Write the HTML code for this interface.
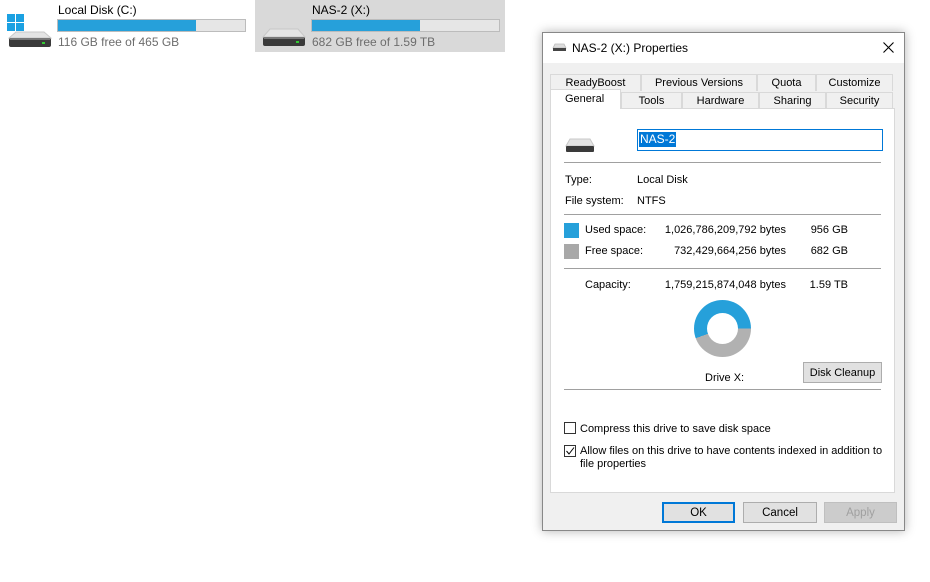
<!DOCTYPE html>
<html><head><style>
body{margin:0;width:930px;height:582px;background:#fff;position:relative;overflow:hidden;font-family:"Liberation Sans",sans-serif;font-size:11px;color:#000}
.a{position:absolute;white-space:nowrap}
.bar{position:absolute;height:13px;background:#e6e6e6;border:1px solid #bcbcbc;box-sizing:border-box}
.bar i{display:block;height:100%;background:#26a0da}
.tab{position:absolute;height:17px;border:1px solid #d9d9d9;border-bottom:none;background:#f0f0f0;box-sizing:border-box;text-align:center;line-height:16px}
.hr{position:absolute;left:564px;width:317px;height:1px;background:#a0a0a0}
.btn{position:absolute;height:21px;border:1px solid #adadad;background:#e1e1e1;box-sizing:border-box;text-align:center;line-height:20px;font-size:11.5px}
.r{text-align:right}
.cb{position:absolute;width:12px;height:12px;border:1px solid #333;background:#fff;box-sizing:border-box}
</style></head><body>
<div class="a" style="left:255px;top:0;width:250px;height:52px;background:#d9d9d9"></div>
<svg class="a" style="left:8px;top:31px" width="44" height="17"><path d="M8 1 L36 1 L43 7 L1 7 Z" fill="#e4e4e4" stroke="#c8c8c8"/><rect x="1" y="7" width="42" height="9" rx="2" fill="#3a3a3a"/><rect x="2" y="7" width="40" height="2" fill="#777"/><rect x="34" y="11" width="3" height="2" fill="#3c3"/></svg>
<svg class="a" style="left:7px;top:14px" width="18" height="18"><rect x="0" y="0" width="8" height="8" fill="#1ba1e2"/><rect x="9" y="0" width="8" height="8" fill="#1ba1e2"/><rect x="0" y="9" width="8" height="8" fill="#1ba1e2"/><rect x="9" y="9" width="8" height="8" fill="#1ba1e2"/></svg>
<div class="a" style="left:58px;top:3px;font-size:12px">Local Disk (C:)</div>
<div class="bar" style="left:57px;top:19px;width:189px"><i style="width:74%"></i></div>
<div class="a" style="left:58px;top:35px;font-size:12px;color:#6d6d6d">116 GB free of 465 GB</div>
<svg class="a" style="left:262px;top:28px" width="44" height="20"><path d="M8 1 L36 1 L43 9 L1 9 Z" fill="#e4e4e4" stroke="#c8c8c8"/><rect x="1" y="9" width="42" height="9" rx="2" fill="#3a3a3a"/><rect x="2" y="9" width="40" height="2" fill="#777"/><rect x="34" y="13" width="3" height="2" fill="#3c3"/></svg>
<div class="a" style="left:312px;top:3px;font-size:12px">NAS-2 (X:)</div>
<div class="bar" style="left:311px;top:19px;width:189px"><i style="width:58%"></i></div>
<div class="a" style="left:312px;top:35px;font-size:12px;color:#6d6d6d">682 GB free of 1.59 TB</div>

<div class="a" style="left:542px;top:32px;width:363px;height:499px;background:#f0f0f0;border:1px solid #888;box-sizing:border-box;box-shadow:0 0 10px rgba(0,0,0,.3)"></div>
<div class="a" style="left:543px;top:33px;width:361px;height:30px;background:#fff"></div>
<svg class="a" style="left:552px;top:43px" width="15" height="9"><path d="M3 1 L12 1 L14 5 L1 5Z" fill="#ddd" stroke="#bbb" stroke-width=".8"/><rect x="1" y="5" width="13" height="3" fill="#444"/></svg>
<div class="a" style="left:572px;top:41px;font-size:12px">NAS-2 (X:) Properties</div>
<svg class="a" style="left:883px;top:42px" width="11" height="11"><path d="M0.5 0.5 L10.5 10.5 M10.5 0.5 L0.5 10.5" stroke="#000" stroke-width="1.1"/></svg>

<div class="a" style="left:550px;top:108px;width:345px;height:385px;background:#fff;border:1px solid #d9d9d9;box-sizing:border-box"></div>
<div class="tab" style="left:550px;top:74px;width:91px">ReadyBoost</div>
<div class="tab" style="left:641px;top:74px;width:116px">Previous Versions</div>
<div class="tab" style="left:757px;top:74px;width:59px">Quota</div>
<div class="tab" style="left:816px;top:74px;width:77px">Customize</div>
<div class="tab" style="left:621px;top:92px;width:61px;height:16px">Tools</div>
<div class="tab" style="left:682px;top:92px;width:77px;height:16px">Hardware</div>
<div class="tab" style="left:759px;top:92px;width:67px;height:16px">Sharing</div>
<div class="tab" style="left:826px;top:92px;width:67px;height:16px">Security</div>
<div class="tab" style="left:550px;top:89px;width:71px;height:20px;background:#fff;line-height:18px;text-align:left;padding-left:14px">General</div>

<svg class="a" style="left:565px;top:138px" width="30" height="16"><path d="M5 1 L25 1 L29 8 L1 8Z" fill="#e4e4e4" stroke="#c8c8c8"/><rect x="1" y="8" width="28" height="6" rx="1" fill="#3a3a3a"/></svg>
<div class="a" style="left:637px;top:129px;width:246px;height:22px;border:1px solid #0078d7;box-sizing:border-box;background:#fff"></div>
<div class="a" style="left:639px;top:132px;background:#0078d7;color:#fff;font-size:12px;line-height:15px;padding:0 1px">NAS-2</div>
<div class="hr" style="top:162px"></div>
<div class="a" style="left:565px;top:174px">Type:</div>
<div class="a" style="left:637px;top:174px">Local Disk</div>
<div class="a" style="left:565px;top:195px">File system:</div>
<div class="a" style="left:637px;top:195px">NTFS</div>
<div class="hr" style="top:214px"></div>
<div class="a" style="left:564px;top:223px;width:15px;height:15px;background:#26a0da"></div>
<div class="a" style="left:585px;top:224px">Used space:</div>
<div class="a r" style="left:640px;top:224px;width:146px">1,026,786,209,792 bytes</div>
<div class="a r" style="left:790px;top:224px;width:58px">956 GB</div>
<div class="a" style="left:564px;top:244px;width:15px;height:15px;background:#a8a8a8"></div>
<div class="a" style="left:585px;top:245px">Free space:</div>
<div class="a r" style="left:640px;top:245px;width:146px">732,429,664,256 bytes</div>
<div class="a r" style="left:790px;top:245px;width:58px">682 GB</div>
<div class="hr" style="top:268px"></div>
<div class="a" style="left:585px;top:279px">Capacity:</div>
<div class="a r" style="left:640px;top:279px;width:146px">1,759,215,874,048 bytes</div>
<div class="a r" style="left:790px;top:279px;width:58px">1.59 TB</div>
<div class="a" style="left:694px;top:300px;width:57px;height:57px;border-radius:50%;background:conic-gradient(from -110deg,#26a0da 0deg 200deg,#b1b1b1 200deg 360deg)"></div>
<div class="a" style="left:707px;top:313px;width:31px;height:31px;border-radius:50%;background:#fff"></div>
<div class="a" style="left:705px;top:372px">Drive X:</div>
<div class="btn" style="left:803px;top:362px;width:79px;font-size:11px">Disk Cleanup</div>
<div class="hr" style="top:389px"></div>
<div class="cb" style="left:564px;top:422px"></div>
<div class="a" style="left:580px;top:423px">Compress this drive to save disk space</div>
<div class="cb" style="left:564px;top:445px"></div>
<svg class="a" style="left:565px;top:446px" width="10" height="10"><path d="M1.5 5 L4 8 L9 1.5" stroke="#000" stroke-width="1" fill="none"/></svg>
<div class="a" style="left:580px;top:445px;line-height:13px">Allow files on this drive to have contents indexed in addition to<br>file properties</div>

<div class="btn" style="left:662px;top:502px;width:73px;border:2px solid #0078d7;line-height:18px">OK</div>
<div class="btn" style="left:743px;top:502px;width:74px">Cancel</div>
<div class="btn" style="left:824px;top:502px;width:73px;color:#a0a0a0;background:#ccc;border-color:#bfbfbf">Apply</div>
</body></html>
